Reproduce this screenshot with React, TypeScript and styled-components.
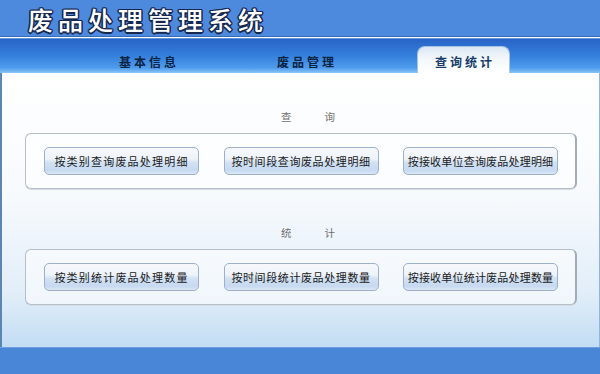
import React from "react";
import styled, { createGlobalStyle } from "styled-components";

const Global = createGlobalStyle`
  html, body { margin: 0; padding: 0; background: #ffffff; overflow: hidden; }
  body { font-family: "Noto Sans CJK SC", "Noto Sans", sans-serif; }
`;

const Page = styled.div`
  width: 600px;
  height: 374px;
  display: flex;
  flex-direction: column;
`;

const Header = styled.header`
  height: 37px;
  flex: none;
  background: #4d89dc;
  border-bottom: 1px solid #3a6cb5;
  display: flex;
  align-items: center;
  padding-left: 28px;
  box-sizing: border-box;
`;

const Title = styled.h1`
  margin: 0;
  font-family: "Noto Sans CJK SC", sans-serif;
  font-weight: 500;
  font-size: 25px;
  letter-spacing: 5px;
  color: #ffffff;
  line-height: 1;
  margin-top: 2px;
  text-shadow:
    -1.5px 0 0 #17284f, 1.5px 0 0 #17284f, 0 -1.5px 0 #17284f, 0 1.5px 0 #17284f,
    -1px -1px 0 #17284f, 1px 1px 0 #17284f, -1px 1px 0 #17284f, 1px -1px 0 #17284f;
`;

const Divider = styled.div`
  height: 2px;
  flex: none;
  background: #ffffff;
  border-bottom: 1px solid #5f95dc;
  box-sizing: border-box;
`;

const Nav = styled.nav`
  height: 34px;
  flex: none;
  background: linear-gradient(180deg, #2864c6 0%, #3580dc 50%, #4e9cee 85%, #8cc4f7 100%);
  display: grid;
  grid-template-columns: 93px 93px 93px;
  column-gap: 65px;
  padding-left: 101px;
  align-items: end;
`;

const Tab = styled.div<{ $active?: boolean }>`
  height: 27px;
  box-sizing: border-box;
  padding-top: 3px;
  display: flex;
  align-items: center;
  justify-content: center;
  font-size: 12px;
  font-weight: 700;
  letter-spacing: 3px;
  text-indent: 3px;
  color: ${(p) => (p.$active ? "#173c6c" : "#0c2444")};
  border-radius: 8px 8px 0 0;
  background: ${(p) =>
    p.$active ? "linear-gradient(180deg, #dbe7f4 0%, #f3f7fb 45%, #ffffff 100%)" : "transparent"};
  border: ${(p) => (p.$active ? "1px solid #a9c4e2" : "1px solid transparent")};
  border-bottom: none;
`;

const Content = styled.main`
  flex: 1;
  background: linear-gradient(180deg, #ffffff 0%, #f7fafd 45%, #e2eef9 80%, #c2ddf3 100%);
  border-left: 2px solid #5b86b4;
  border-right: 1px solid #8db6e2;
  padding: 37px 22px 0 23px;
  display: flex;
  flex-direction: column;
`;

const SectionLabel = styled.div`
  display: flex;
  justify-content: center;
  gap: 33px;
  padding-left: 14px;
  font-size: 10.5px;
  color: #707070;
  line-height: 14px;
  height: 14px;
  margin-bottom: 9px;
`;

const Box = styled.section<{ $gap?: number }>`
  height: 56px;
  box-sizing: border-box;
  border: 1px solid #b6bec8;
  border-right: 2px solid #a2acb7;
  border-radius: 6px;
  background: rgba(255, 255, 255, 0.55);
  box-shadow: 0 1px 0 #d4dbe3;
  display: flex;
  align-items: center;
  justify-content: space-between;
  padding: 0 17px 0 18px;
  margin-bottom: ${(p) => p.$gap ?? 0}px;
`;

const Button = styled.button<{ $spacing: number }>`
  width: 155px;
  height: 28px;
  margin-top: -1px;
  border: 1px solid #9cb0ca;
  border-radius: 5px;
  background: linear-gradient(180deg, #f6f8fb 0%, #eef3f9 42%, #d3e2f3 55%, #c6d9f0 85%, #dbe7f5 100%);
  font-family: "Noto Sans CJK SC", sans-serif;
  font-size: 11px;
  color: #1a1a1a;
  letter-spacing: ${(p) => p.$spacing}px;
  padding: 0;
  cursor: pointer;
  white-space: nowrap;
`;

const Footer = styled.footer`
  height: 27px;
  flex: none;
  background: #4a86d8;
  border-top: 1px solid #6d9fe0;
  box-sizing: border-box;
`;

const queryButtons = [
  { text: "按类别查询废品处理明细", spacing: 1.2 },
  { text: "按时间段查询废品处理明细", spacing: 0.6 },
  { text: "按接收单位查询废品处理明细", spacing: 0.2 },
];

const statButtons = [
  { text: "按类别统计废品处理数量", spacing: 1.2 },
  { text: "按时间段统计废品处理数量", spacing: 0.6 },
  { text: "按接收单位统计废品处理数量", spacing: 0.2 },
];

export default function App() {
  return (
    <Page>
      <Global />
      <Header>
        <Title>废品处理管理系统</Title>
      </Header>
      <Divider />
      <Nav>
        <Tab>基本信息</Tab>
        <Tab>废品管理</Tab>
        <Tab $active>查询统计</Tab>
      </Nav>
      <Content>
        <SectionLabel>
          <span>查</span>
          <span>询</span>
        </SectionLabel>
        <Box $gap={37}>
          {queryButtons.map((b) => (
            <Button key={b.text} $spacing={b.spacing}>
              {b.text}
            </Button>
          ))}
        </Box>
        <SectionLabel>
          <span>统</span>
          <span>计</span>
        </SectionLabel>
        <Box>
          {statButtons.map((b) => (
            <Button key={b.text} $spacing={b.spacing}>
              {b.text}
            </Button>
          ))}
        </Box>
      </Content>
      <Footer />
    </Page>
  );
}
